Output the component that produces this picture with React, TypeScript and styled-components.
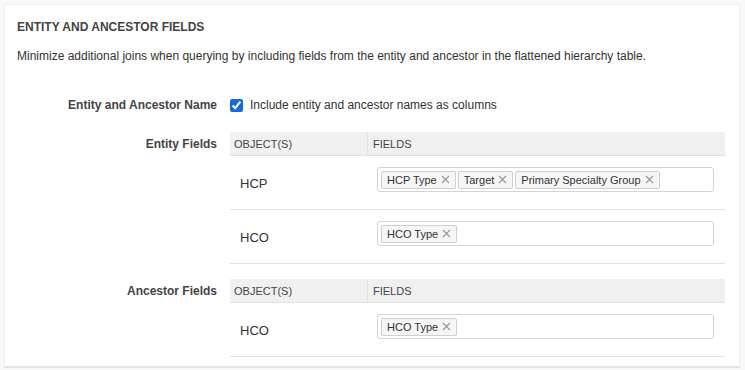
import React, { FC } from 'react';
import styled, { createGlobalStyle } from 'styled-components';

const GlobalStyle = createGlobalStyle`
  html, body {
    margin: 0;
    padding: 0;
    background: #f8f8f8;
    font-family: 'Liberation Sans', Arial, sans-serif;
    color: #333;
  }
`;

const Page = styled.div`
  padding: 4px 5px 0 4px;
`;

const Card = styled.section`
  background: #fff;
  border: 1px solid #f0f0f0;
  border-bottom: 2px solid #e6e6e6;
  padding: 15px 14px 8px 12px;
  height: 364px;
  box-sizing: border-box;
  overflow: hidden;
`;

const Title = styled.h2`
  margin: 0;
  font-size: 12px;
  font-weight: bold;
  color: #444;
  text-transform: uppercase;
  line-height: 14px;
`;

const Description = styled.p`
  margin: 15px 0 0;
  font-size: 12px;
  line-height: 14px;
  color: #333;
`;

const Form = styled.div`
  display: grid;
  grid-template-columns: 200px 1fr;
  column-gap: 13px;
  margin-top: 34px;
`;

const Label = styled.div<{ top: number }>`
  text-align: right;
  font-size: 12px;
  font-weight: bold;
  color: #444;
  line-height: 14px;
  padding-top: ${(p) => p.top}px;
`;

const CheckRow = styled.label`
  display: flex;
  align-items: center;
  gap: 7px;
  font-size: 12px;
  color: #333;
  height: 16px;
  margin-bottom: 19px;
`;

const Check = styled.input`
  margin: 0;
  width: 13px;
  height: 13px;
  accent-color: #1769e0;
`;

const Table = styled.div<{ bottomGap: number }>`
  display: grid;
  grid-template-columns: 137px 1fr;
  margin-bottom: ${(p) => p.bottomGap}px;
`;

const HeadCell = styled.div<{ divider?: boolean }>`
  background: #f0f0f0;
  height: 24px;
  box-sizing: border-box;
  display: flex;
  align-items: center;
  font-size: 11px;
  color: #444;
  text-transform: uppercase;
  border-bottom: 1px solid #e2e2e2;
  border-left: ${(p) => (p.divider ? '1px solid #e2e2e2' : 'none')};
  padding-left: ${(p) => (p.divider ? '5px' : '4px')};
`;

const ObjectCell = styled.div`
  height: 54px;
  box-sizing: border-box;
  border-bottom: 1px solid #e2e2e2;
  display: flex;
  align-items: center;
  padding-left: 10px;
  padding-top: 1px;
  font-size: 13px;
  color: #333;
`;

const FieldCell = styled.div`
  height: 54px;
  box-sizing: border-box;
  border-bottom: 1px solid #e2e2e2;
  display: flex;
  align-items: flex-start;
  padding: 11px 11px 0 10px;
`;

const TagInput = styled.div`
  flex: 1;
  height: 25px;
  box-sizing: border-box;
  border: 1px solid #d4d4d4;
  border-radius: 3px;
  display: flex;
  align-items: center;
  gap: 2px;
  padding-left: 3px;
  background: #fff;
`;

const Tag = styled.span`
  display: inline-flex;
  align-items: center;
  gap: 4px;
  height: 18px;
  box-sizing: border-box;
  border: 1px solid #cfcfcf;
  border-radius: 2px;
  background: #f6f6f6;
  padding: 0 5px;
  font-size: 11px;
  color: #333;
`;

const Remove = styled.svg`
  width: 9px;
  height: 9px;
  stroke: #999;
  stroke-width: 1.2;
`;

type Row = { object: string; fields: string[] };

const FieldTable: FC<{ rows: Row[]; bottomGap: number }> = ({ rows, bottomGap }) => (
  <Table bottomGap={bottomGap}>
    <HeadCell>Object(s)</HeadCell>
    <HeadCell divider>Fields</HeadCell>
    {rows.map((r) => (
      <React.Fragment key={r.object}>
        <ObjectCell>{r.object}</ObjectCell>
        <FieldCell>
          <TagInput>
            {r.fields.map((f) => (
              <Tag key={f}>
                {f}
                <Remove viewBox="0 0 9 9">
                  <path d="M1 1L8 8M8 1L1 8" />
                </Remove>
              </Tag>
            ))}
          </TagInput>
        </FieldCell>
      </React.Fragment>
    ))}
  </Table>
);

const entityRows: Row[] = [
  { object: 'HCP', fields: ['HCP Type', 'Target', 'Primary Specialty Group'] },
  { object: 'HCO', fields: ['HCO Type'] },
];

const ancestorRows: Row[] = [{ object: 'HCO', fields: ['HCO Type'] }];

const App: FC = () => (
  <Page>
    <GlobalStyle />
    <Card>
      <Title>Entity and Ancestor Fields</Title>
      <Description>
        Minimize additional joins when querying by including fields from the entity and ancestor in the flattened
        hierarchy table.
      </Description>
      <Form>
        <Label top={1}>Entity and Ancestor Name</Label>
        <CheckRow>
          <Check type="checkbox" defaultChecked />
          Include entity and ancestor names as columns
        </CheckRow>
        <Label top={5}>Entity Fields</Label>
        <FieldTable rows={entityRows} bottomGap={15} />
        <Label top={5}>Ancestor Fields</Label>
        <FieldTable rows={ancestorRows} bottomGap={0} />
      </Form>
    </Card>
  </Page>
);

export default App;
